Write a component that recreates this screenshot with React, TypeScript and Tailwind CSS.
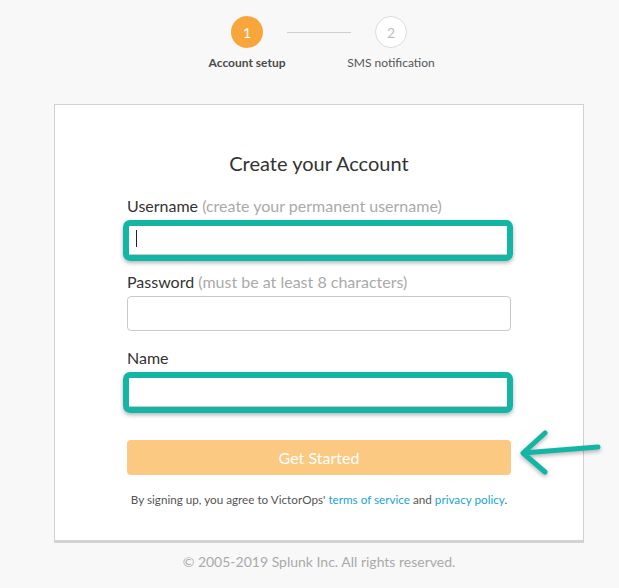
import React from 'react';

interface StepProps {
  num: number;
  label: string;
  active?: boolean;
}

function Step({ num, label, active }: StepProps) {
  return (
    <div className="flex w-8 flex-col items-center">
      <div
        className={`flex h-8 w-8 items-center justify-center rounded-full text-[14px] ${
          active ? 'bg-[#f8a63b] text-white' : 'border border-[#dcdcdc] bg-white text-[#bdbdbd]'
        }`}
      >
        {num}
      </div>
      <span
        className={`mt-[8px] whitespace-nowrap text-[12px] leading-[14px] ${
          active ? 'font-bold text-[#4a4a4a]' : 'text-[#555]'
        }`}
      >
        {label}
      </span>
    </div>
  );
}

interface FieldProps {
  label: string;
  hint?: string;
  type?: string;
  highlight?: boolean;
  caret?: boolean;
}

function Field({ label, hint, type = 'text', highlight, caret }: FieldProps) {
  return (
    <div className="mb-[17px]">
      <label className="mb-1 block text-[16px] leading-5 text-[#333]">
        {label}
        {hint && <span className="text-[#aaa]"> {hint}</span>}
      </label>
      <div className="relative">
        <input
          type={type}
          className="block h-[35px] w-full rounded-[4px] border border-[#c9c9c9] bg-white px-2 outline-none"
        />
        {caret && <div className="absolute left-[9px] top-[10px] h-[17px] w-px bg-[#222]" />}
        {/* annotation box */}
        {highlight && (
          <div className="pointer-events-none absolute -left-[4px] -right-[2px] top-0 -bottom-[6px] rounded-[7px] border-[6px] border-[#13b6a5] shadow-[0_2px_4px_rgba(0,0,0,0.3)]" />
        )}
      </div>
    </div>
  );
}

export default function App() {
  return (
    <div className="relative min-h-[588px] w-[619px] bg-[#f8f8f8] font-['Lato',sans-serif]">
      {/* Stepper */}
      <div className="ml-[54px] flex w-[530px] justify-center pt-4">
        <Step num={1} label="Account setup" active />
        <div className="mx-6 mt-4 h-px w-16 bg-[#cfcfcf]" />
        <Step num={2} label="SMS notification" />
      </div>

      {/* Card */}
      <div className="ml-[54px] mt-[34px] w-[530px] border border-b-[3px] border-[#d0d0d0] border-b-[#d3d3d3] bg-white px-[72px] pb-[33px] pt-[46px]">
        <h1 className="mb-[21px] text-center text-[20px] leading-6 text-[#333]">Create your Account</h1>

        <Field label="Username" hint="(create your permanent username)" highlight caret />
        <Field label="Password" hint="(must be at least 8 characters)" type="password" />
        <Field label="Name" highlight />

        <button className="mt-[33px] block h-[35px] w-full rounded-[4px] bg-[#fcc983] text-[16px] text-white">
          Get Started
        </button>

        <p className="mt-4 whitespace-nowrap text-center text-[11.7px] leading-4 text-[#555]">
          By signing up, you agree to VictorOps'{' '}
          <a className="text-[#17a4d8]">terms of service</a> and{' '}
          <a className="text-[#17a4d8]">privacy policy</a>.
        </p>
      </div>

      <p className="ml-[54px] mt-[9px] w-[530px] text-center text-[14px] leading-5 text-[#aaa]">
        © 2005-2019 Splunk Inc. All rights reserved.
      </p>

      {/* Annotation arrow */}
      <svg
        className="absolute left-[510px] top-[420px]"
        width="100"
        height="70"
        viewBox="0 0 100 70"
        fill="none"
        style={{ filter: 'drop-shadow(0 2px 2px rgba(0,0,0,0.3))' }}
      >
        <path
          d="M88 27 L13 33 M35 13 L13 33 L35 52"
          stroke="#13b6a5"
          strokeWidth="5"
          strokeLinecap="round"
          strokeLinejoin="round"
        />
      </svg>
    </div>
  );
}
